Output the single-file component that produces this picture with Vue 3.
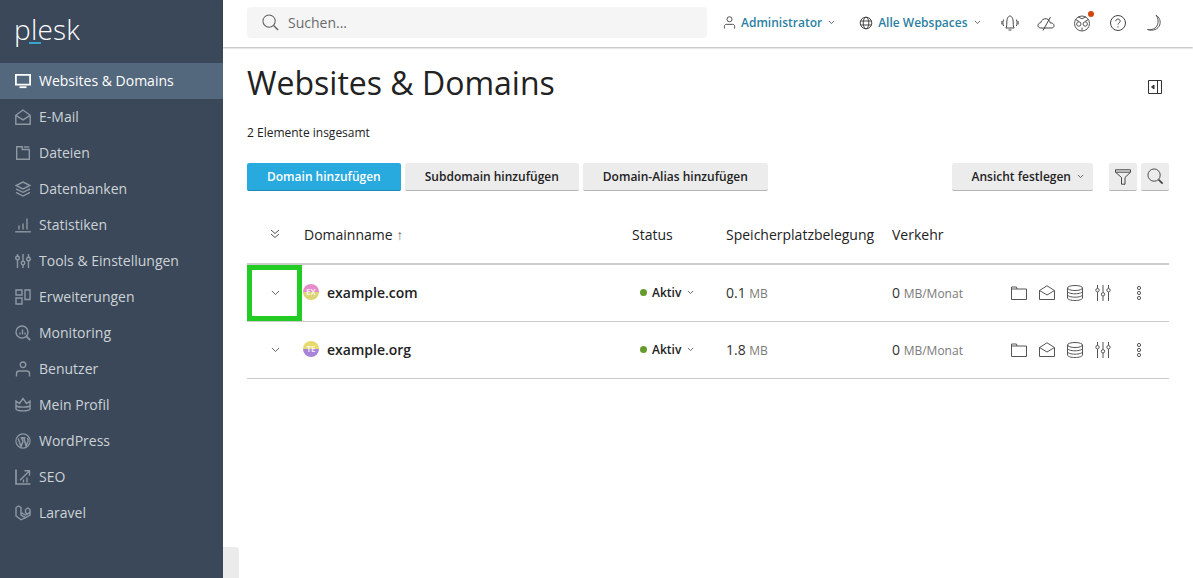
<script setup>
const navItems = [
  { label: 'Websites & Domains', icon: 'monitor', active: true },
  { label: 'E-Mail', icon: 'mail' },
  { label: 'Dateien', icon: 'folder' },
  { label: 'Datenbanken', icon: 'layers' },
  { label: 'Statistiken', icon: 'stats' },
  { label: 'Tools & Einstellungen', icon: 'sliders' },
  { label: 'Erweiterungen', icon: 'blocks' },
  { label: 'Monitoring', icon: 'monitoring' },
  { label: 'Benutzer', icon: 'user' },
  { label: 'Mein Profil', icon: 'crown' },
  { label: 'WordPress', icon: 'wp' },
  { label: 'SEO', icon: 'seo' },
  { label: 'Laravel', icon: 'laravel' }
]

const domains = [
  { name: 'example.com', short: 'EX', avatar: 'avatar-ex', used: '0.1', traffic: '0', selected: true },
  { name: 'example.org', short: 'TE', avatar: 'avatar-te', used: '1.8', traffic: '0' }
]
</script>

<template>
  <div class="page">
    <aside class="sidebar">
      <div class="logo">p<span class="logo-l">l</span>esk</div>
      <nav class="nav">
        <a v-for="item in navItems" :key="item.label" class="nav-item" :class="{ active: item.active }">
          <svg class="nav-icon" viewBox="0 0 16 16" fill="none" stroke="currentColor" stroke-width="1.4">
            <template v-if="item.icon === 'monitor'">
              <path d="M.9 1.900h14.200v9.700H.9z" stroke-width="1.800" />
              <path d="M4.500 14.200h7" stroke-width="1.800" />
            </template>
            <template v-else-if="item.icon === 'mail'">
              <path d="M.8 6.300 8 1l7.200 5.300v8.900H.8z" />
              <path d="M.8 6.300 8 10.800l7.200-4.500" />
            </template>
            <template v-else-if="item.icon === 'folder'">
              <path d="M1.700 1.800h5.500v2.700h7.100v9.700H1.700z" />
              <path d="M8.800 2h5.500" />
            </template>
            <template v-else-if="item.icon === 'layers'">
              <path d="M8 1 15 4.500 8 8 1 4.500z" />
              <path d="M1 7.800l7 3.500 7-3.500M1 11.300l7 3.700 7-3.700" />
            </template>
            <template v-else-if="item.icon === 'stats'">
              <path d="M.2 14.800h15.600" />
              <path d="M4 12.500V8.500M8 12.500V6.500M12 12.500V1.500" />
            </template>
            <template v-else-if="item.icon === 'sliders'">
              <path d="M2.500 1v2M2.500 7v8M8 1v7M8 12v3M13.500 1v3M13.500 8v7" />
              <circle cx="2.500" cy="5" r="1.800" />
              <circle cx="8" cy="10" r="1.800" />
              <circle cx="13.500" cy="6" r="1.800" />
            </template>
            <template v-else-if="item.icon === 'blocks'">
              <path d="M1 1h6v5H1zM1 9h6v6H1zM10 1h5v9.500h-5z" />
            </template>
            <template v-else-if="item.icon === 'monitoring'">
              <circle cx="7" cy="7" r="6" />
              <path d="M11.300 11.300 15.200 15.200" stroke-width="1.800" />
              <path d="M5 9.500V7.500M7.500 9.500V4.500M10 9.500V7.500" />
            </template>
            <template v-else-if="item.icon === 'user'">
              <circle cx="8" cy="3.800" r="2.800" />
              <path d="M1.500 15.500v-3c0-1.500 1.500-2.500 3-2.500h7c1.500 0 3 1 3 2.500v3" />
            </template>
            <template v-else-if="item.icon === 'crown'">
              <path d="M1 4 4.500 6.500 8 1.500l3.500 5L15 4v8c-1 2.500-13 2.500-14 0z" />
              <path d="M1 9c3 1.500 11 1.500 14 0" />
            </template>
            <template v-else-if="item.icon === 'wp'">
              <circle cx="8" cy="8" r="7.100" stroke-width="1.200" />
              <path d="M3.200 5.500 6 13.500 8 8.500 6.500 4.800M5.500 4.800h5M8.800 4.800l2.300 8.500 1.900-5.300c.4-1.300.1-2.200-.5-3.200" stroke-width="1.500" />
            </template>
            <template v-else-if="item.icon === 'seo'">
              <path d="M1 .5v14.500h14.500" stroke-width="1.700" />
              <path d="M9.500 1.700h5v5M14.500 1.700 5 11.200M8.500 13.500v-3M12 13.500V8.500" />
            </template>
            <template v-else>
              <path d="M1 2.500 3.500 1 6 2.500v7.500l4.500 2.700 4.500-2.500V7.500L10.500 10 6 7.500" />
              <path d="M1 2.500v8.500l5 3.800 4.500-2.100M10.500 4.500 13 3l2 1.500v3M10.500 4.500v3L13 9" />
            </template>
          </svg>
          <span>{{ item.label }}</span>
        </a>
      </nav>
    </aside>
    <div class="sidebar-handle"></div>

    <div class="content">
      <header class="topbar">
        <div class="search">
          <svg class="search-icon" viewBox="0 0 18 18" fill="none" stroke="#5f5f5f" stroke-width="1.100">
            <circle cx="7.500" cy="7.500" r="6.500" />
            <path d="M12.500 12.500 17 17" stroke-width="1.500" />
          </svg>
          <span>Suchen...</span>
        </div>
        <a class="top-link user-link">
          <svg class="top-link-icon" viewBox="0 0 14 14" fill="none" stroke="#444" stroke-width="1">
            <circle cx="7" cy="3.500" r="2.700" />
            <path d="M1.500 13.500v-2.500c0-1.200 1-2 2-2h7c1 0 2 .8 2 2v2.500" />
          </svg>
          Administrator
          <svg class="caret" viewBox="0 0 8 5" fill="none" stroke="#555"><path d="M1 1l3 3 3-3" /></svg>
        </a>
        <a class="top-link space-link">
          <svg class="top-link-icon globe" viewBox="0 0 14 14" fill="none" stroke="#444" stroke-width="1">
            <circle cx="7" cy="7" r="5.800" />
            <ellipse cx="7" cy="7" rx="2.800" ry="5.800" />
            <path d="M1.500 5h11M1.500 9h11" />
          </svg>
          Alle Webspaces
          <svg class="caret" viewBox="0 0 8 5" fill="none" stroke="#555"><path d="M1 1l3 3 3-3" /></svg>
        </a>
        <div class="top-icons">
          <svg viewBox="0 0 18 18" fill="none" stroke="#444" stroke-width="1">
            <path d="M4.800 14c.9-1 1-2.500 1-6 0-3 1.300-6 3.200-6s3.200 3 3.200 6c0 3.500.1 5 1 6zM7.500 16h3" />
            <path d="M2.600 5.500c-.9 2-.9 4.500 0 6.500M15.400 5.500c.9 2 .9 4.500 0 6.500M1 7c-.3 1-.3 2.500 0 3.500M17 7c.3 1 .3 2.500 0 3.500" />
          </svg>
          <svg viewBox="0 0 18 18" fill="none" stroke="#444" stroke-width="1">
            <path d="M5 14H3.800C2 14 .8 12.700 1 11.200c.2-1.300 1.100-2.300 2.700-2.500C4.300 6 7 4.200 9.500 4.800 12 5.400 13 7.200 13 8.800c2.200 0 4 1 4 2.900 0 1.400-1 2.300-2.500 2.300H5z" />
            <path d="M6 16.500 13.500 3" />
          </svg>
          <span class="ball">
            <svg viewBox="0 0 18 18" fill="none" stroke="#555" stroke-width="1">
              <circle cx="9" cy="9.500" r="7.500" />
              <path d="M2.500 5.500 6 7.500M15.500 5.500 12 7.500M9 16.500v-3" />
              <circle cx="5.800" cy="10" r="2.200" />
              <circle cx="12.200" cy="10" r="2.200" />
              <path d="M5 2.800 9 4.800l4-2" />
            </svg>
            <i class="ball-dot"></i>
          </span>
          <svg viewBox="0 0 18 18" fill="none" stroke="#444" stroke-width="1">
            <circle cx="9" cy="9" r="7.500" />
            <path d="M6.800 7.200C6.800 5.900 7.800 5 9 5s2.200.9 2.200 2.100c0 1.700-2.200 1.800-2.200 3.500" />
            <path d="M9 12.300v1.200" />
          </svg>
          <svg viewBox="0 0 18 18" fill="none" stroke="#555" stroke-width="1">
            <path d="M11 1c3.500 2.500 5 6 3.700 10C13.300 15 8 17.500 2.500 15.500c4.500.7 8.500-1 10-4.700C13.700 7.500 13.200 4 11 1z" />
          </svg>
        </div>
      </header>

      <main class="main">
        <div class="title-row">
          <h1>Websites &amp; Domains</h1>
          <svg class="panel-toggle" viewBox="0 0 14 14" fill="none" stroke="#333" stroke-width="1">
            <path d="M.5.500h13v13H.5zM9.500.500v13" />
            <path d="M6 5v4L3.500 7z" fill="#333" />
          </svg>
        </div>
        <p class="total">2 Elemente insgesamt</p>

        <div class="toolbar">
          <button class="btn primary">Domain hinzufügen</button>
          <button class="btn">Subdomain hinzufügen</button>
          <button class="btn">Domain-Alias hinzufügen</button>
          <div class="toolbar-right">
            <button class="btn view-btn">
              Ansicht festlegen
              <svg class="caret" viewBox="0 0 8 5" fill="none" stroke="#555"><path d="M1 1l3 3 3-3" /></svg>
            </button>
            <button class="btn icon-btn">
              <svg viewBox="0 0 16 16" fill="none" stroke="#444" stroke-width="1">
                <path d="M.5.800h15v2.400L10 8.500v6.700H6.500V8.500L.5 3.200z" />
                <path d="M.5 3.200h15" />
              </svg>
            </button>
            <button class="btn icon-btn">
              <svg viewBox="0 0 18 18" fill="none" stroke="#444" stroke-width="1">
                <circle cx="7.500" cy="7.500" r="6.500" />
                <path d="M12.300 12.300 16.500 16.500" stroke-width="1.800" />
              </svg>
            </button>
          </div>
        </div>

        <div class="table">
          <div class="row head">
            <div class="cell-toggle">
              <svg class="expand-all" viewBox="0 0 10 10" fill="none" stroke="#555"><path d="M1 1l4 3.500L9 1M1 5l4 3.500L9 5" /></svg>
            </div>
            <div class="head-name">Domainname <span class="sort">↑</span></div>
            <div>Status</div>
            <div>Speicherplatzbelegung</div>
            <div>Verkehr</div>
            <div></div>
          </div>
          <div v-for="d in domains" :key="d.name" class="row body">
            <div class="cell-toggle" :class="{ selected: d.selected }">
              <svg class="expand" viewBox="0 0 10 6" fill="none" stroke="#555"><path d="M1 1l4 4 4-4" /></svg>
            </div>
            <div class="domain">
              <span class="avatar" :class="d.avatar">{{ d.short }}</span>
              <span>{{ d.name }}</span>
            </div>
            <div class="status">
              <i class="dot"></i>Aktiv
              <svg class="caret" viewBox="0 0 8 5" fill="none" stroke="#555"><path d="M1 1l3 3 3-3" /></svg>
            </div>
            <div class="num">{{ d.used }} <small>MB</small></div>
            <div class="num">{{ d.traffic }} <small>MB/Monat</small></div>
            <div class="actions">
              <svg viewBox="0 0 16 16" fill="none" stroke="#555" stroke-width="1">
                <path d="M.5 2h5l.5 2h9.500v10.500H.5zM.5 4H6" />
              </svg>
              <svg viewBox="0 0 16 16" fill="none" stroke="#555" stroke-width="1">
                <path d="M.5 5.500 8 .8l7.500 4.700v9H.5z" />
                <path d="M.5 5.500 8 10l7.500-4.500" />
              </svg>
              <svg viewBox="0 0 16 16" fill="none" stroke="#555" stroke-width="1">
                <ellipse cx="8" cy="3" rx="7.500" ry="2.500" />
                <path d="M.5 3v10c0 1.400 3.400 2.500 7.500 2.500s7.500-1.100 7.500-2.500V3" />
                <path d="M.5 6.300c0 1.400 3.400 2.500 7.500 2.500s7.500-1.100 7.500-2.500M.5 9.700c0 1.400 3.400 2.500 7.500 2.500s7.500-1.100 7.500-2.500" />
              </svg>
              <svg viewBox="0 0 16 16" fill="none" stroke="#555" stroke-width="1">
                <path d="M2.500 0v3.500M2.500 7v9M8 0v7.500M8 11v5M13.500 0v3.500M13.500 7v9" />
                <circle cx="2.500" cy="5.200" r="1.700" />
                <circle cx="8" cy="9.300" r="1.700" />
                <circle cx="13.500" cy="5.200" r="1.700" />
              </svg>
              <svg class="more" viewBox="0 0 6 16" fill="none" stroke="#555" stroke-width="1">
                <circle cx="3" cy="3" r="1.600" />
                <circle cx="3" cy="8" r="1.600" />
                <circle cx="3" cy="13" r="1.600" />
              </svg>
            </div>
          </div>
        </div>
      </main>
    </div>
  </div>
</template>

<style>
html, body { margin: 0; background: #fff; overflow: hidden; }
</style>

<style scoped>
.page {
  display: flex;
  height: 578px;
  font-family: "Open Sans", "Liberation Sans", sans-serif;
  color: #222;
  position: relative;
  overflow: hidden;
}

.sidebar {
  width: 223px;
  flex-shrink: 0;
  background: #3a4859;
  color: #cdd2d7;
}

.logo {
  height: 63px;
  box-sizing: border-box;
  padding: 10px 0 0 14px;
  font-size: 28px;
  line-height: 38px;
  font-weight: 300;
  color: #fff;
  letter-spacing: 0.2px;
}

.logo-l {
  position: relative;
}

.logo-l::after {
  content: "";
  position: absolute;
  left: -2px;
  top: 32px;
  width: 12px;
  height: 2px;
  background: #3ba5c9;
}

.nav-item {
  display: flex;
  align-items: center;
  height: 36px;
  padding-left: 15px;
  gap: 8px;
  font-size: 14px;
}

.nav-item span {
  margin-bottom: 2px;
}

.nav-item.active {
  background: #53687c;
  color: #fff;
}

.nav-icon {
  width: 16px;
  height: 16px;
  color: #8e98a3;
  flex-shrink: 0;
}

.active .nav-icon {
  color: #fff;
}

.sidebar-handle {
  position: absolute;
  left: 223px;
  top: 547px;
  width: 16px;
  height: 31px;
  background: #ebebeb;
  border-top-right-radius: 4px;
}

.content {
  flex: 1;
  min-width: 0;
}

.topbar {
  height: 47px;
  display: flex;
  align-items: center;
  padding: 0 24px;
  box-shadow: 0 1px 2px rgba(0, 0, 0, 0.3);
}

.search {
  width: 460px;
  height: 31px;
  margin-top: -2px;
  box-sizing: border-box;
  background: #f5f5f5;
  border-radius: 4px;
  display: flex;
  align-items: center;
  gap: 9px;
  padding-left: 15px;
  font-size: 14px;
  color: #6b6b6b;
}

.search-icon {
  width: 17px;
  height: 17px;
}

.top-link {
  display: flex;
  align-items: center;
  font-size: 12px;
  font-weight: 600;
  color: #2b7fa3;
  margin-top: -2px;
}

.user-link {
  margin-left: 16px;
}

.space-link {
  margin-left: 24px;
}

.top-link-icon {
  width: 13px;
  height: 13px;
  margin-right: 5px;
}

.top-link-icon.globe {
  width: 14px;
  height: 14px;
}

.caret {
  width: 7px;
  height: 4.500px;
  margin-left: 6px;
  flex-shrink: 0;
}

.top-icons {
  display: flex;
  align-items: center;
  gap: 18px;
  margin-left: 20px;
  margin-top: -2px;
}

.top-icons svg {
  width: 18px;
  height: 18px;
  display: block;
}

.ball {
  position: relative;
  display: block;
}

.ball-dot {
  position: absolute;
  top: -3px;
  right: -3px;
  width: 6px;
  height: 6px;
  border-radius: 50%;
  background: #d1450f;
}

.main {
  padding: 0 24px;
}

.title-row {
  display: flex;
  justify-content: space-between;
  align-items: center;
  height: 73px;
  padding-top: 1px;
}

h1 {
  margin: 0 0 5px;
  font-size: 32px;
  font-weight: 400;
  color: #222;
}

.panel-toggle {
  width: 14px;
  height: 14px;
  margin-right: 7px;
  margin-top: 5px;
}

.total {
  margin: 0;
  padding-top: 3px;
  font-size: 12px;
  line-height: 17px;
  height: 38px;
}

.toolbar {
  display: flex;
  gap: 4px;
  height: 28px;
  margin-top: 1px;
}

.btn {
  height: 28px;
  border: 0;
  border-bottom: 1px solid #b5b5b5;
  border-radius: 2px;
  background: #ececec;
  font-family: inherit;
  font-size: 12px;
  font-weight: 600;
  color: #222;
  padding: 0 20px;
  white-space: nowrap;
}

.btn.primary {
  background: #28aade;
  border-bottom-color: #1e8ab8;
  color: #fff;
}

.toolbar-right {
  margin-left: auto;
  display: flex;
  gap: 4px;
}

.view-btn {
  display: flex;
  align-items: center;
  padding: 0 9px 0 20px;
  margin-right: 12px;
}

.icon-btn {
  width: 28px;
  padding: 0;
  display: flex;
  align-items: center;
  justify-content: center;
}

.icon-btn svg {
  width: 16px;
  height: 16px;
}

.icon-btn:last-child svg {
  width: 17px;
  height: 17px;
}

.table {
  margin-top: 16px;
}

.row {
  display: grid;
  grid-template-columns: 56px 329px 94px 166px 118px 1fr;
  align-items: center;
}

.head {
  height: 56px;
  font-size: 14px;
  border-bottom: 2px solid #ccc;
}

.head > div {
  margin-bottom: 2px;
}

.head-name {
  padding-left: 1px;
}

.sort {
  color: #777;
  font-size: 14px;
}

.expand-all {
  width: 10px;
  height: 10px;
  display: block;
}

.cell-toggle {
  height: 100%;
  display: flex;
  align-items: center;
  justify-content: center;
  box-sizing: border-box;
}

.body .cell-toggle {
  padding-bottom: 1px;
}

.body .cell-toggle.selected {
  border: 5px solid #22cc22;
  width: 55px;
  height: 56px;
  padding: 0 0 1px 1px;
  align-self: start;
}

.body {
  height: 56px;
  border-bottom: 1px solid #ccc;
}

.body > div:not(.cell-toggle):not(.actions) {
  margin-bottom: 2px;
}

.expand {
  width: 9px;
  height: 5.500px;
}

.domain {
  display: flex;
  align-items: center;
  gap: 8px;
  font-size: 14px;
  font-weight: 600;
}

.avatar {
  width: 16px;
  height: 16px;
  border-radius: 50%;
  font-size: 8px;
  line-height: 16px;
  font-weight: 700;
  text-align: center;
  color: rgba(255, 255, 255, 0.8);
}

.avatar-ex {
  background: linear-gradient(#e68ccb 50%, #dcd476 50%);
}

.avatar-te {
  background: linear-gradient(#e8d96c 50%, #a884d8 50%);
}

.status {
  display: flex;
  align-items: center;
  padding-left: 8px;
  font-size: 12px;
  font-weight: 600;
}

.dot {
  width: 7px;
  height: 7px;
  border-radius: 50%;
  background: #659b2c;
  margin-right: 5px;
}

.num {
  font-size: 14px;
  color: #333;
}

.num small {
  font-size: 12px;
  color: #7a7a7a;
}

.actions {
  display: flex;
  align-items: center;
  gap: 12px;
  padding-left: 1px;
}

.actions svg {
  width: 16px;
  height: 16px;
}

.actions svg.more {
  width: 6px;
  margin-left: 13px;
}
</style>
